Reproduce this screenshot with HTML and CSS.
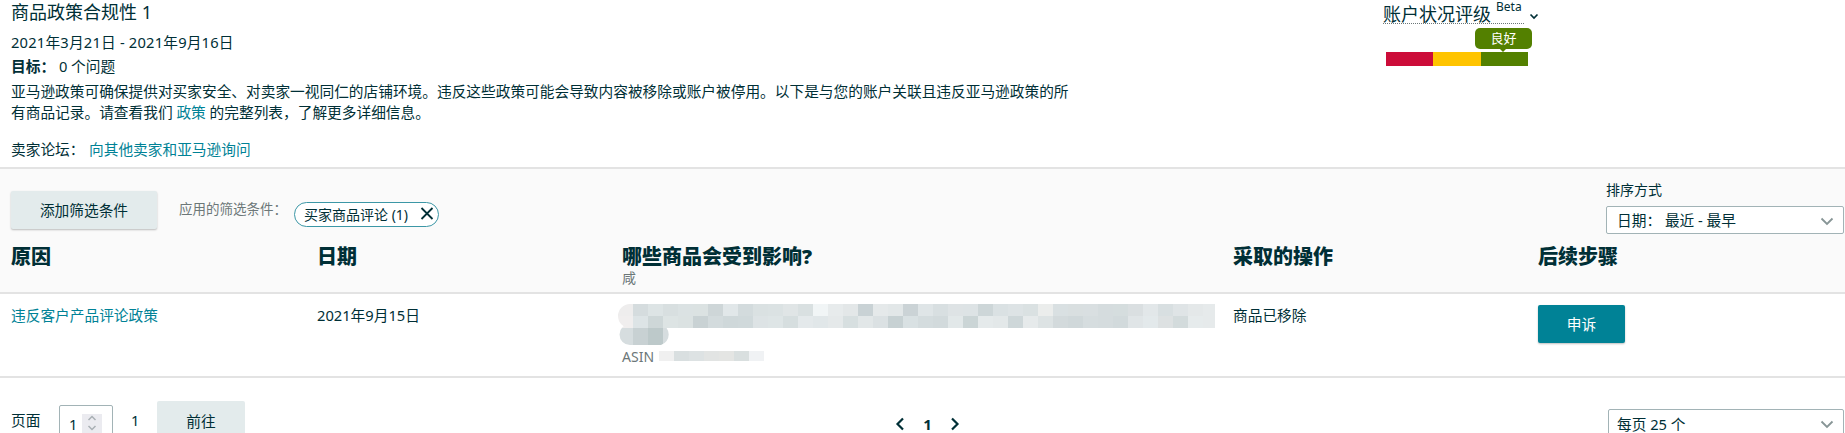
FILE: index.html
```html
<!DOCTYPE html>
<html lang="zh-CN">
<head>
<meta charset="utf-8">
<title>商品政策合规性</title>
<link rel="stylesheet" href="styles.css">
</head>
<body>
<header class="top">
  <div class="intro">
    <h1 class="title">商品政策合规性 1</h1>
    <div class="date-range">2021年3月21日 - 2021年9月16日</div>
    <div class="target"><b>目标：</b> 0 个问题</div>
    <p class="desc">亚马逊政策可确保提供对买家安全、对卖家一视同仁的店铺环境。违反这些政策可能会导致内容被移除或账户被停用。以下是与您的账户关联且违反亚马逊政策的所有商品记录。请查看我们 <a href="#">政策</a> 的完整列表，了解更多详细信息。</p>
    <div class="forum"><span class="forum-label">卖家论坛：</span><a href="#">向其他卖家和亚马逊询问</a></div>
  </div>
  <div class="health">
    <div class="health-head">
      <span class="health-title">账户状况评级<sup class="beta">Beta</sup></span>
      <svg class="health-chev" width="10" height="7" viewBox="0 0 10 7"><path d="M1.5 1.5 5 5l3.500-3.500" fill="none" stroke="#002f36" stroke-width="1.700"/></svg>
    </div>
    <div class="meter">
      <span class="badge">良好</span>
      <i class="seg seg-red"></i><i class="seg seg-yellow"></i><i class="seg seg-green"></i>
    </div>
  </div>
</header>

<section class="filters">
  <div class="toolbar">
    <button class="btn-add">添加筛选条件</button>
    <span class="applied">应用的筛选条件：</span>
    <span class="pill">买家商品评论 (1)
      <svg class="pill-x" width="14" height="13" viewBox="0 0 14 13"><path d="M1.500 1 12.500 12M12.500 1 1.500 12" fill="none" stroke="#002f36" stroke-width="1.800"/></svg>
    </span>
    <div class="sort">
      <div class="sort-label">排序方式</div>
      <div class="select sort-select">日期： 最近 - 最早
        <svg class="select-chev" width="14" height="9" viewBox="0 0 14 9"><path d="M1.500 1.500 7 7l5.500-5.500" fill="none" stroke="#879596" stroke-width="1.800"/></svg>
      </div>
    </div>
  </div>
  <div class="grid head-row">
    <div class="col-head">原因</div>
    <div class="col-head">日期</div>
    <div><div class="col-head">哪些商品会受到影响?</div><div class="col-sub">咸</div></div>
    <div class="col-head">采取的操作</div>
    <div class="col-head">后续步骤</div>
  </div>
</section>

<section class="grid body-row">
  <div><a href="#">违反客户产品评论政策</a></div>
  <div>2021年9月15日</div>
  <div class="product">
    <svg class="mosaic" width="597" height="42" viewBox="0 0 597 42">
      <defs>
        <clipPath id="clipA"><path d="M12 0H597V24H12A12 12 0 0 1 12 0ZM12 20H43A11 11 0 0 1 43 41H12A10.500 10.500 0 0 1 12 20Z"/></clipPath>
      </defs>
      <g clip-path="url(#clipA)">
        <rect x="0" y="0" width="15" height="12" fill="#eeeded"/><rect x="15" y="0" width="15" height="12" fill="#d5dcde"/><rect x="30" y="0" width="15" height="12" fill="#dde4e5"/><rect x="45" y="0" width="15" height="12" fill="#d8dfe0"/><rect x="60" y="0" width="15" height="12" fill="#dbe2e3"/><rect x="75" y="0" width="15" height="12" fill="#dbe2e2"/><rect x="90" y="0" width="15" height="12" fill="#ced6d8"/><rect x="105" y="0" width="15" height="12" fill="#e1e7e9"/><rect x="120" y="0" width="15" height="12" fill="#d3dbdd"/><rect x="135" y="0" width="15" height="12" fill="#dae1e2"/><rect x="150" y="0" width="15" height="12" fill="#dbe2e3"/><rect x="165" y="0" width="15" height="12" fill="#e0e5e6"/><rect x="180" y="0" width="15" height="12" fill="#d9e0e1"/><rect x="195" y="0" width="15" height="12" fill="#f1f5f6"/><rect x="210" y="0" width="15" height="12" fill="#e7ebec"/><rect x="225" y="0" width="15" height="12" fill="#e3e7e8"/><rect x="240" y="0" width="15" height="12" fill="#c9d2d5"/><rect x="255" y="0" width="15" height="12" fill="#e5e9ea"/><rect x="270" y="0" width="15" height="12" fill="#e2e7e8"/><rect x="285" y="0" width="15" height="12" fill="#cbd3d6"/><rect x="300" y="0" width="15" height="12" fill="#dfe5e7"/><rect x="315" y="0" width="15" height="12" fill="#d8dfe1"/><rect x="330" y="0" width="15" height="12" fill="#dee3e5"/><rect x="345" y="0" width="15" height="12" fill="#dde3e5"/><rect x="360" y="0" width="15" height="12" fill="#cdd6d8"/><rect x="375" y="0" width="15" height="12" fill="#dae1e3"/><rect x="390" y="0" width="15" height="12" fill="#dde3e5"/><rect x="405" y="0" width="15" height="12" fill="#dae1e2"/><rect x="420" y="0" width="15" height="12" fill="#ebedec"/><rect x="435" y="0" width="15" height="12" fill="#d9e0e2"/><rect x="450" y="0" width="15" height="12" fill="#d9dfe0"/><rect x="465" y="0" width="15" height="12" fill="#d9dfe1"/><rect x="480" y="0" width="15" height="12" fill="#d5dcde"/><rect x="495" y="0" width="15" height="12" fill="#d5ddde"/><rect x="510" y="0" width="15" height="12" fill="#dadfe1"/><rect x="525" y="0" width="15" height="12" fill="#e2e7e9"/><rect x="540" y="0" width="15" height="12" fill="#d8dfe1"/><rect x="555" y="0" width="15" height="12" fill="#dfe4e6"/><rect x="570" y="0" width="15" height="12" fill="#e4e8e9"/><rect x="585" y="0" width="12" height="12" fill="#e6eaeb"/>
        <rect x="0" y="12" width="15" height="12" fill="#f0eeee"/><rect x="15" y="12" width="15" height="12" fill="#dde4e6"/><rect x="30" y="12" width="15" height="12" fill="#ced7d8"/><rect x="45" y="12" width="15" height="12" fill="#dde4e4"/><rect x="60" y="12" width="15" height="12" fill="#dbe2e2"/><rect x="75" y="12" width="15" height="12" fill="#c9d2d4"/><rect x="90" y="12" width="15" height="12" fill="#d3dbdd"/><rect x="105" y="12" width="15" height="12" fill="#cfd8da"/><rect x="120" y="12" width="15" height="12" fill="#d0d9db"/><rect x="135" y="12" width="15" height="12" fill="#dde3e5"/><rect x="150" y="12" width="15" height="12" fill="#dee5e6"/><rect x="165" y="12" width="15" height="12" fill="#d6dedf"/><rect x="180" y="12" width="15" height="12" fill="#e4e9eb"/><rect x="195" y="12" width="15" height="12" fill="#e1e7e9"/><rect x="210" y="12" width="15" height="12" fill="#e5e9ea"/><rect x="225" y="12" width="15" height="12" fill="#d7dfe0"/><rect x="240" y="12" width="15" height="12" fill="#e2e7e8"/><rect x="255" y="12" width="15" height="12" fill="#dbe1e3"/><rect x="270" y="12" width="15" height="12" fill="#c7d1d3"/><rect x="285" y="12" width="15" height="12" fill="#d9e1e3"/><rect x="300" y="12" width="15" height="12" fill="#d4dcde"/><rect x="315" y="12" width="15" height="12" fill="#d2dadc"/><rect x="330" y="12" width="15" height="12" fill="#e2e8e9"/><rect x="345" y="12" width="15" height="12" fill="#cbd5d6"/><rect x="360" y="12" width="15" height="12" fill="#e5eaeb"/><rect x="375" y="12" width="15" height="12" fill="#e3e8e9"/><rect x="390" y="12" width="15" height="12" fill="#ced7d9"/><rect x="405" y="12" width="15" height="12" fill="#e6eaeb"/><rect x="420" y="12" width="15" height="12" fill="#dde3e4"/><rect x="435" y="12" width="15" height="12" fill="#d3dadc"/><rect x="450" y="12" width="15" height="12" fill="#d0d8da"/><rect x="465" y="12" width="15" height="12" fill="#d6dddf"/><rect x="480" y="12" width="15" height="12" fill="#d5dcde"/><rect x="495" y="12" width="15" height="12" fill="#d2dadc"/><rect x="510" y="12" width="15" height="12" fill="#e0e5e7"/><rect x="525" y="12" width="15" height="12" fill="#e3e9eb"/><rect x="540" y="12" width="15" height="12" fill="#dde1e2"/><rect x="555" y="12" width="15" height="12" fill="#d3dbdc"/><rect x="570" y="12" width="15" height="12" fill="#e6ebec"/><rect x="585" y="12" width="12" height="12" fill="#e6eaeb"/>
        <rect x="0" y="24" width="15" height="18" fill="#d6dddf"/><rect x="15" y="24" width="15" height="18" fill="#c8d1d3"/><rect x="30" y="24" width="15" height="18" fill="#bdc9ca"/><rect x="45" y="24" width="15" height="18" fill="#d6dddf"/>
      </g>
    </svg>
    <div class="asin">ASIN
      <svg class="asin-blur" width="105" height="10" viewBox="0 0 105 10"><rect width="15" height="10" fill="#f0f0f0"/><rect x="15" width="15" height="10" fill="#d9dfe0"/><rect x="30" width="15" height="10" fill="#dde2e3"/><rect x="45" width="15" height="10" fill="#e2e4e3"/><rect x="60" width="15" height="10" fill="#e4e5e3"/><rect x="75" width="15" height="10" fill="#d9dfdf"/><rect x="90" width="15" height="10" fill="#f0f2f4"/></svg>
    </div>
  </div>
  <div>商品已移除</div>
  <div><button class="btn-appeal">申诉</button></div>
</section>

<footer class="pager-bar">
  <div class="page-jump">
    <span class="page-label">页面</span>
    <div class="page-input"><span>1</span>
      <span class="spinner">
        <svg width="10" height="20" viewBox="0 0 10 20"><path d="M1.500 6 5 2.500 8.500 6M1.500 12 5 15.500 8.500 12" fill="none" stroke="#a9b0b4" stroke-width="1.500"/></svg>
      </span>
    </div>
    <span class="page-total">1</span>
    <button class="btn-go">前往</button>
  </div>
  <nav class="pager">
    <svg width="10" height="14" viewBox="0 0 10 14"><path d="M8 1.500 2.500 7 8 12.500" fill="none" stroke="#002f36" stroke-width="2.200"/></svg>
    <b>1</b>
    <svg width="10" height="14" viewBox="0 0 10 14"><path d="M2 1.500 7.500 7 2 12.500" fill="none" stroke="#002f36" stroke-width="2.200"/></svg>
  </nav>
  <div class="select per-page">每页 25 个
    <svg class="select-chev" width="14" height="9" viewBox="0 0 14 9"><path d="M1.500 1.500 7 7l5.500-5.500" fill="none" stroke="#879596" stroke-width="1.800"/></svg>
  </div>
</footer>
</body>
</html>
```

FILE: styles.css
```css
* { box-sizing: border-box; }
html, body { margin: 0; height: 433px; overflow: hidden; background: #fff; }
body {
  font-family: "Noto Sans", "Noto Sans CJK SC", sans-serif;
  font-size: 14.7px;
  line-height: 21px;
  color: #002f36;
}
a { color: #008296; text-decoration: none; }
button { font: inherit; color: inherit; border: 0; padding: 0; }

/* top */
.top { display: flex; height: 169px; padding-left: 11px; border-bottom: 2px solid #e3e3e3; }
.intro { width: 1372px; }
.title { margin: 0; font-size: 18px; font-weight: 400; line-height: 24px; }
.date-range { margin-top: 8px; letter-spacing: .2px; }
.target { margin-top: 3px; }
.target b { font-weight: 700; }
.desc { margin: 4px 0 0; width: 1064px; }
.forum { margin-top: 16px; }
.forum-label { display: inline-block; width: 78px; }

.health { width: 160px; }
.health-head { display: flex; align-items: flex-start; height: 28px; }
.health-title {
  display: block;
  width: 141px;
  height: 24px;
  font-size: 18px;
  line-height: 28px;
  border-bottom: 1px dotted #6c7778;
  white-space: nowrap;
}
.beta { font-size: 12px; line-height: 12px; vertical-align: baseline; position: relative; top: -10px; left: 5px; }
.health-chev { margin: 13px 0 0 5px; }
.meter { position: relative; display: flex; margin: 24px 0 0 3px; width: 142px; height: 14px; }
.seg { display: block; height: 14px; }
.seg-red { width: 47px; background: #cc0c39; }
.seg-yellow { width: 48px; background: #ffc400; }
.seg-green { width: 47px; background: #538000; }
.badge {
  position: absolute;
  left: 89px;
  top: -24px;
  width: 57px;
  height: 21px;
  border-radius: 5px;
  background: #538000;
  color: #fff;
  font-size: 13px;
  line-height: 20px;
  text-align: center;
}
.badge::after {
  content: "";
  position: absolute;
  left: 24px;
  bottom: -3px;
  border: 4px solid transparent;
  border-bottom: 0;
  border-top-color: #538000;
}

/* filters */
.filters { height: 125px; background: #fafafa; border-bottom: 2px solid #e3e3e3; }
.toolbar { display: flex; align-items: flex-start; height: 68px; padding: 0 1px 0 11px; }
.btn-add {
  width: 146px;
  height: 38px;
  margin-top: 22px;
  border-radius: 2px;
  background: #e3ebec;
  box-shadow: 0 1px 2px rgba(0, 0, 0, .25);
  font-size: 14.7px;
}
.applied { margin: 30px 0 0 22px; width: 115px; font-size: 13.500px; color: #6c7778; white-space: nowrap; }
.pill {
  position: relative;
  display: block;
  width: 145px;
  height: 25px;
  margin-top: 33px;
  padding-left: 9px;
  border: 1px solid #3c97a6;
  border-radius: 13px;
  background: #fff;
  font-size: 14px;
  line-height: 23px;
  white-space: nowrap;
}
.pill-x { position: absolute; right: 4px; top: 4px; }
.sort { margin: 11px 0 0 auto; width: 238px; }
.sort-label { font-size: 14px; line-height: 20px; }
.select {
  position: relative;
  height: 28px;
  padding-left: 10px;
  border: 1px solid #a2b3b6;
  border-radius: 2px;
  background: #fff;
  line-height: 26px;
}
.sort-select { margin-top: 6px; width: 238px; }
.select-chev { position: absolute; right: 9px; top: 10px; }

.grid { display: grid; grid-template-columns: 306px 305px 611px 305px 1fr; padding-left: 11px; }
.head-row { padding-top: 6px; }
.col-head { font-size: 20px; font-weight: 900; line-height: 28px; }
.col-sub { font-size: 14px; line-height: 14px; color: #6c7778; }

.body-row { height: 84px; padding-top: 11px; border-bottom: 2px solid #e3e3e3; }
.product { margin-left: -4px; margin-top: -1px; }
.mosaic { display: block; }
.asin { display: flex; align-items: center; margin: 0 0 0 4px; height: 20px; font-size: 14px; color: #6c7778; }
.asin-blur { margin-left: 5px; }
.btn-appeal {
  display: block;
  width: 87px;
  height: 38px;
  border-radius: 2px;
  background: #008296;
  color: #fff;
  box-shadow: 0 1px 2px rgba(0, 0, 0, .25);
  font-size: 14.7px;
}

/* footer */
.pager-bar { display: grid; grid-template-columns: 884px 65px 1fr; padding-left: 11px; padding-right: 1px; }
.page-jump { display: flex; align-items: flex-start; }
.page-label { margin-top: 32px; width: 48px; }
.page-input {
  display: flex;
  width: 54px;
  height: 40px;
  margin-top: 27px;
  padding: 8px 0 0 9px;
  border: 1px solid #a2b3b6;
  border-radius: 2px 2px 0 0;
  background: #fff;
  font-size: 14.7px;
}
.spinner { display: block; width: 20px; height: 24px; margin-left: 5px; background: #ebebf0; }
.spinner svg { display: block; margin: 0 5px; }
.page-total { margin-top: 32px; width: 44px; padding-left: 18px; }
.btn-go { width: 88px; height: 40px; margin-top: 23px; border-radius: 2px; background: #e3ebec; }
.pager { display: flex; align-items: flex-start; justify-content: space-between; width: 65px; margin-top: 39px; }
.pager b { line-height: 14px; font-size: 15px; }
.per-page { width: 236px; height: 40px; margin: 31px 0 0 auto; padding-left: 8px; line-height: 28px; }
.per-page .select-chev { top: 10px; }
```
